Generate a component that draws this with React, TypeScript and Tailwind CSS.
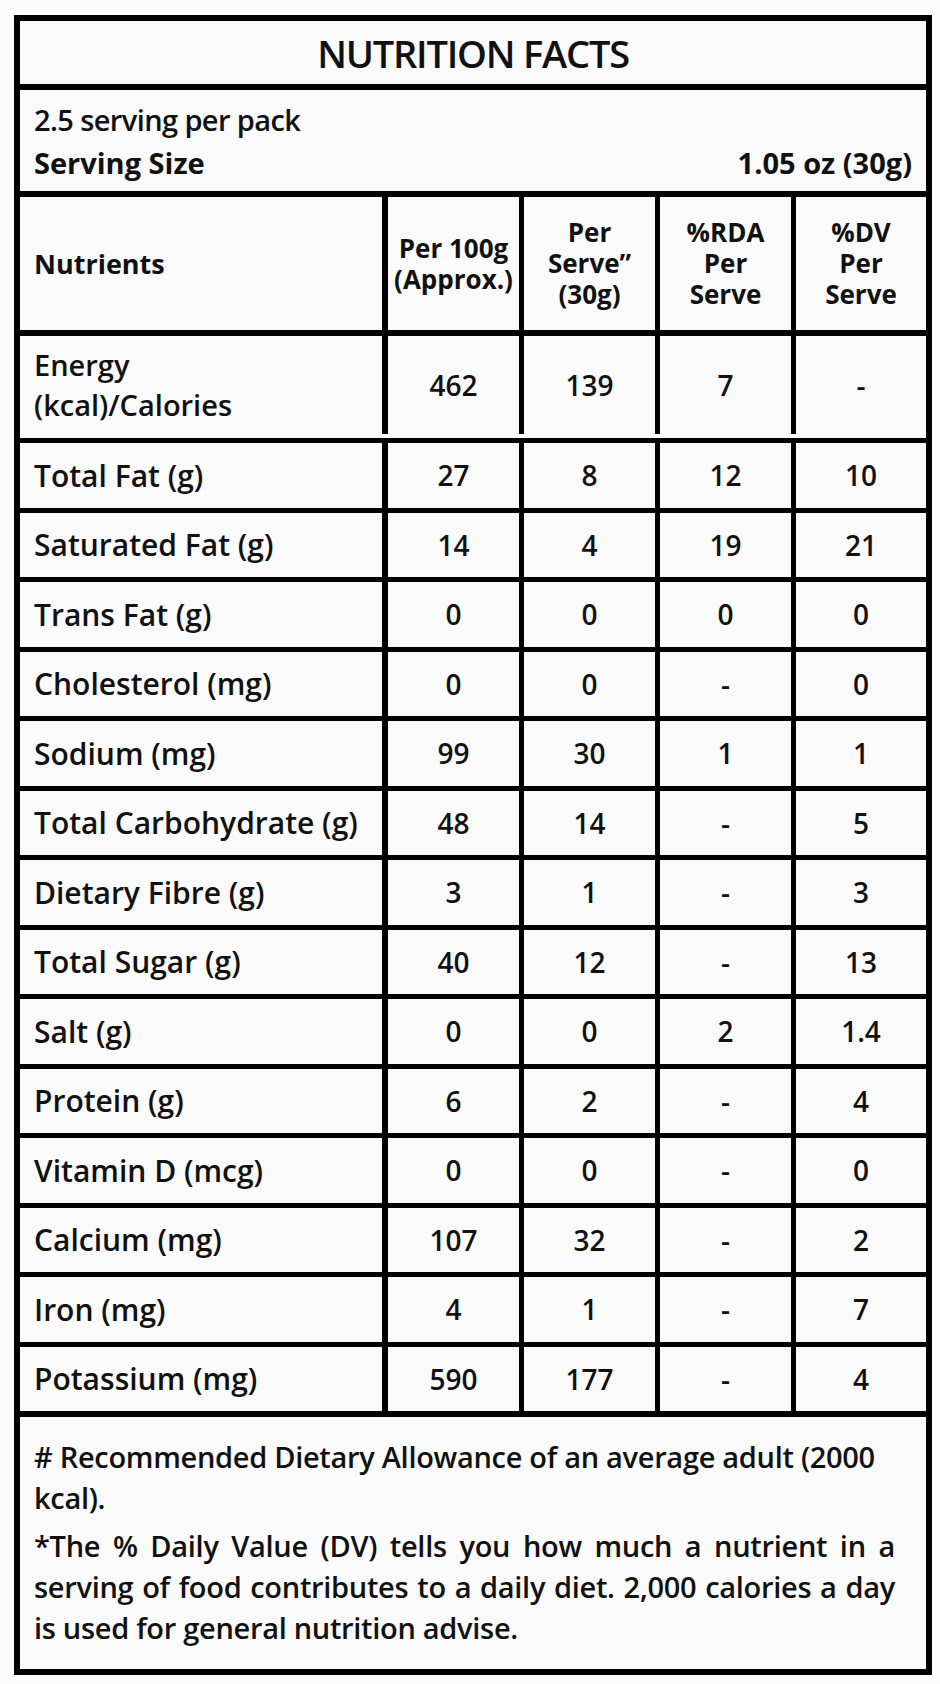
const font = "font-['Open_Sans',sans-serif]";

const rows: [string, string, string, string, string][] = [
  ["Total Fat (g)", "27", "8", "12", "10"],
  ["Saturated Fat (g)", "14", "4", "19", "21"],
  ["Trans Fat (g)", "0", "0", "0", "0"],
  ["Cholesterol (mg)", "0", "0", "-", "0"],
  ["Sodium (mg)", "99", "30", "1", "1"],
  ["Total Carbohydrate (g)", "48", "14", "-", "5"],
  ["Dietary Fibre (g)", "3", "1", "-", "3"],
  ["Total Sugar (g)", "40", "12", "-", "13"],
  ["Salt (g)", "0", "0", "2", "1.4"],
  ["Protein (g)", "6", "2", "-", "4"],
  ["Vitamin D (mcg)", "0", "0", "-", "0"],
  ["Calcium (mg)", "107", "32", "-", "2"],
  ["Iron (mg)", "4", "1", "-", "7"],
  ["Potassium (mg)", "590", "177", "-", "4"],
];

const grid = "grid grid-cols-[362px_137px_136px_136px_135px]";

function Cell({ children, first }: { children: React.ReactNode; first?: boolean }) {
  return (
    <div
      className={`flex items-center justify-center text-center border-black ${
        first ? "border-l-[6px]" : "border-l-[5px]"
      }`}
    >
      {children}
    </div>
  );
}

export default function App() {
  return (
    <div className={`${font} w-[940px] h-[1684px] bg-[#fcfcfc] pt-[15px] pl-[14px] text-[#111]`}>
      <div className="w-[918px] border-[6px] border-black bg-[#fafafa]">
        {/* Title */}
        <div className="h-[69px] flex items-center justify-center border-b-[6px] border-black">
          <h1 className="text-[38px] font-semibold leading-none tracking-[-1.2px]">NUTRITION FACTS</h1>
        </div>

        {/* Serving */}
        <div className="h-[107px] border-b-[6px] border-black px-[14px] flex flex-col justify-center text-[29px] leading-[43px]">
          <p className="font-semibold tracking-[-0.6px]">2.5 serving per pack</p>
          <div className="flex justify-between font-bold">
            <span>Serving Size</span>
            <span>1.05 oz (30g)</span>
          </div>
        </div>

        {/* Column headers */}
        <div className={`${grid} h-[139px] border-b-[6px] border-black font-bold text-[26px] leading-[31px]`}>
          <div className="flex items-center px-[14px] text-[27px]">Nutrients</div>
          <Cell first>
            <span>Per 100g<br />(Approx.)</span>
          </Cell>
          <Cell>
            <span>Per<br />Serve”<br />(30g)</span>
          </Cell>
          <Cell>
            <span>%RDA<br />Per<br />Serve</span>
          </Cell>
          <Cell>
            <span>%DV<br />Per<br />Serve</span>
          </Cell>
        </div>

        {/* Energy */}
        <div className={`${grid} h-[107px] pb-[4px] border-b-[5px] border-black font-semibold text-[28px] leading-[40px]`}>
          <div className="flex flex-col justify-center px-[14px] text-[29px]">
            <span>Energy</span>
            <span>(kcal)/Calories</span>
          </div>
          <Cell first>462</Cell>
          <Cell>139</Cell>
          <Cell>7</Cell>
          <Cell>-</Cell>
        </div>

        {/* Nutrient rows */}
        {rows.map((r, i) => (
          <div
            key={r[0]}
            className={`${grid} border-black font-semibold text-[28px] ${
              i === rows.length - 1 ? "h-[70.5px] border-b-[6px]" : "h-[69.5px] border-b-[5px]"
            }`}
          >
            <div className="flex items-center px-[14px] whitespace-nowrap text-[30px]">{r[0]}</div>
            <Cell first>{r[1]}</Cell>
            <Cell>{r[2]}</Cell>
            <Cell>{r[3]}</Cell>
            <Cell>{r[4]}</Cell>
          </div>
        ))}

        {/* Footnotes */}
        <div className="pl-[14px] pr-[31px] pt-[19px] pb-[21px] text-[29px] leading-[41px] font-semibold tracking-[-0.3px]">
          <p className="whitespace-nowrap">
            # Recommended Dietary Allowance of an average adult (2000
          </p>
          <p>kcal).</p>
          <div className="mt-[7px]">
            <p className="whitespace-nowrap text-justify [text-align-last:justify]">
              *The % Daily Value (DV) tells you how much a nutrient in a
            </p>
            <p className="whitespace-nowrap text-justify [text-align-last:justify]">
              serving of food contributes to a daily diet. 2,000 calories a day
            </p>
            <p>is used for general nutrition advise.</p>
          </div>
        </div>
      </div>
    </div>
  );
}
